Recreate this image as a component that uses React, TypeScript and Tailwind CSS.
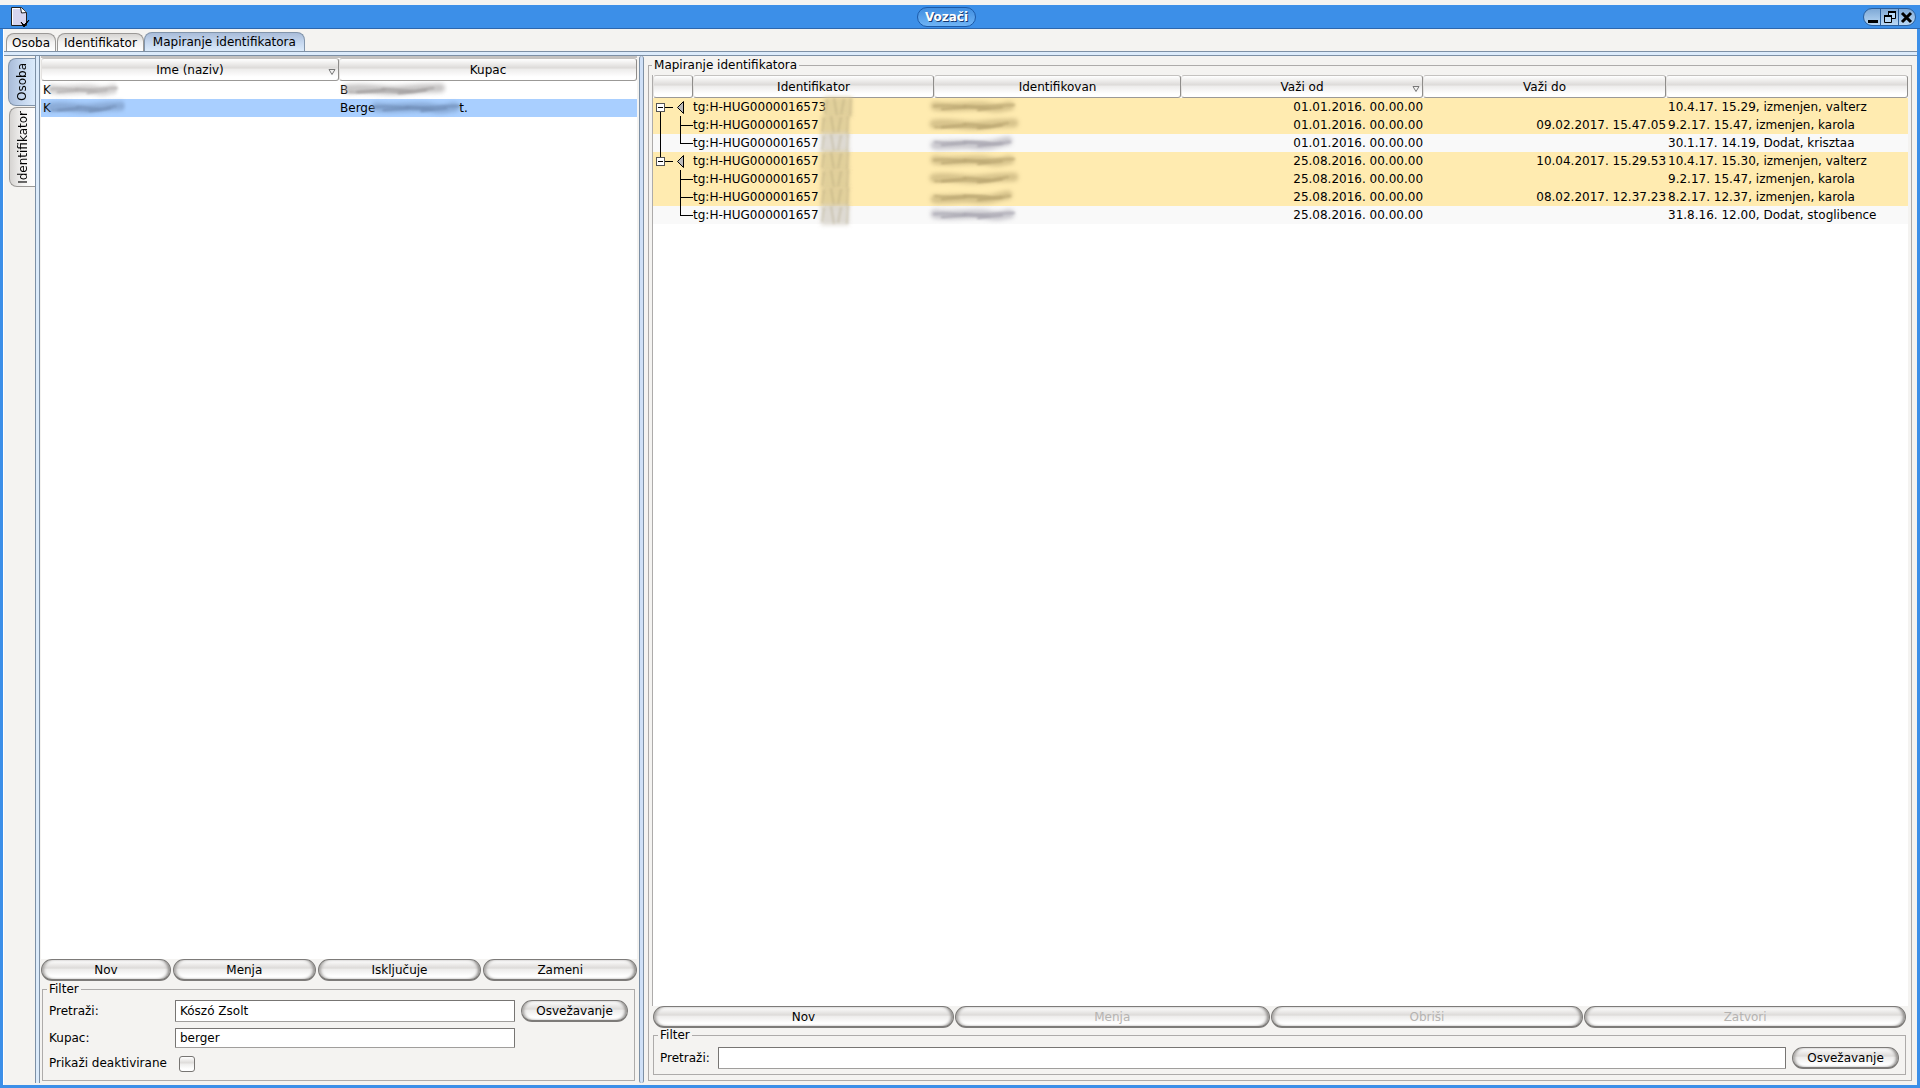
import React, { useState } from 'react';

const history = [
  { tree: 'root', id: 'tg:H-HUG0000016573', from: '01.01.2016. 00.00.00', to: '', note: '10.4.17. 15.29, izmenjen, valterz', hot: true },
  { tree: 'child', id: 'tg:H-HUG000001657', from: '01.01.2016. 00.00.00', to: '09.02.2017. 15.47.05', note: '9.2.17. 15.47, izmenjen, karola', hot: true, trunk: true },
  { tree: 'last', id: 'tg:H-HUG000001657', from: '01.01.2016. 00.00.00', to: '', note: '30.1.17. 14.19, Dodat, krisztaa', hot: false, trunk: true },
  { tree: 'root', id: 'tg:H-HUG000001657', from: '25.08.2016. 00.00.00', to: '10.04.2017. 15.29.53', note: '10.4.17. 15.30, izmenjen, valterz', hot: true, end: true },
  { tree: 'child', id: 'tg:H-HUG000001657', from: '25.08.2016. 00.00.00', to: '', note: '9.2.17. 15.47, izmenjen, karola', hot: true },
  { tree: 'child', id: 'tg:H-HUG000001657', from: '25.08.2016. 00.00.00', to: '08.02.2017. 12.37.23', note: '8.2.17. 12.37, izmenjen, karola', hot: true },
  { tree: 'last', id: 'tg:H-HUG000001657', from: '25.08.2016. 00.00.00', to: '', note: '31.8.16. 12.00, Dodat, stoglibence', hot: false },
];

const glossy = 'bg-[linear-gradient(180deg,#ffffff_0%,#f1f0ef_18%,#dddbd9_42%,#eeedec_50%,#ffffff_85%)]';

function PushButton({ label, className = '', disabled = false }: { label: string; className?: string; disabled?: boolean }) {
  return (
    <button
      type="button"
      disabled={disabled}
      className={`h-[22px] min-w-0 rounded-full border border-[#7d7b79] border-b-2 pt-px text-center leading-4 text-black shadow-[inset_3px_0_3px_-1px_#a5a3a1,inset_-3px_0_3px_-1px_#8c8a88] disabled:text-[#b5b3b1] ${glossy} ${className}`}
    >
      {label}
    </button>
  );
}

function HeaderCell({ label = '', sorted = false }: { label?: string; sorted?: boolean }) {
  return (
    <th className="h-[23px] p-0 font-normal">
      <div className={`relative h-[23px] rounded-[3px] border border-t-[#c4c2c0] border-l-[#e4e2e0] border-r-[#8f8d8b] border-b-[#9b9997] text-center leading-[22px] ${glossy}`}>
        {label}
        {sorted && (
          <svg className="absolute right-0.5 bottom-1 h-2 w-2" viewBox="0 0 8 8" fill="none" stroke="#777">
            <path d="M1 1.5h6L4 6.5z" />
          </svg>
        )}
      </div>
    </th>
  );
}

// Brushed-over part of a cell value
function Smudge({ width, color, variant = 0, className = '' }: { width: number; color: string; variant?: number; className?: string }) {
  const strokes = [
    'M1 8C20 11 38 6 54 9S68 8 76 8',
    'M0 8C18 6 32 11 48 9S68 7 80 7',
    'M1 11C16 12 26 9 42 11S64 8 74 7',
  ];
  return (
    <svg className={`inline-block h-[18px] overflow-visible align-top ${className}`} width={width} height="18" viewBox="0 0 80 18" preserveAspectRatio="none" fill="none">
      <g stroke={color} strokeLinecap="round">
        <path className="blur-[2px]" d={strokes[variant % 3]} strokeWidth="9" opacity="0.6" />
        <path className="blur-[1px]" d={strokes[(variant + 1) % 3]} strokeWidth="2" opacity="0.8" />
        <path className="blur-[1px]" d="M8 11l24-2M30 8l26 2M44 12l24-3" strokeWidth="2" />
      </g>
    </svg>
  );
}

function IdSmudge({ color, className }: { color: string; className: string }) {
  return (
    <svg className={`relative inline-block h-[18px] w-[34px] overflow-visible align-top ${className}`} viewBox="0 0 34 18" fill="none">
      <path className="blur-[2px]" d="M2 -1h28v20H2z" fill={color} opacity="0.75" />
      <path className="blur-[1px]" d="M5 2l-2 14M12 0l3 18M22 1l-3 16M29 0l-1 18" stroke="#a0946e" strokeWidth="2" opacity="0.3" />
    </svg>
  );
}

function TreeCell({ kind, trunk, end }: { kind: string; trunk?: boolean; end?: boolean }) {
  if (kind === 'root') {
    return (
      <svg className="block h-[18px] w-10" viewBox="0 0 40 18" shapeRendering="crispEdges" fill="none" stroke="#000">
        {end ? <path d="M7.5 0v5" /> : <path d="M7.5 13v5" />}
        <rect x="3.5" y="5.5" width="8" height="8" fill="#fff" stroke="#555" />
        <path d="M5 9.5h5M12 9.5h8" />
        <path d="M30.5 3.5v12l-6-6z" fill="#bbb" shapeRendering="auto" />
      </svg>
    );
  }
  return (
    <svg className="block h-[18px] w-10" viewBox="0 0 40 18" shapeRendering="crispEdges" fill="none" stroke="#000">
      {trunk && <path d="M7.5 0v18" />}
      <path d={kind === 'last' ? 'M27.5 0v9.5H40' : 'M27.5 0v18M27.5 9.5H40'} />
    </svg>
  );
}

function TextBox({ id, value, className = '' }: { id: string; value: string; className?: string }) {
  const [text, setText] = useState(value);
  return (
    <input
      id={id}
      type="text"
      value={text}
      onChange={(e) => setText(e.target.value)}
      className={`min-w-0 rounded-[1px] border border-[#777573] border-b-[#a09e9c] bg-white px-1 outline-none ${className}`}
    />
  );
}

export default function App() {
  const [deactivated, setDeactivated] = useState(false);

  return (
    <div className="flex min-h-screen flex-col bg-[#f4f3f1] pt-[5px] font-['DejaVu_Sans',sans-serif] text-[12px] leading-4 text-black">
      {/* Title bar */}
      <header className="flex h-6 items-center border-b border-[#2d67ad] bg-[#3c8fe8] pr-1 pl-2.5">
        <svg className="h-[22px] w-5" viewBox="0 0 20 22" fill="none">
          <path d="M1.5 1.5h10l5 5v13h-15z" fill="#d6d5ef" stroke="#222" />
          <path d="M2.5 2.5v16M2.5 2.5h8" stroke="#fff" />
          <path d="M10.5 1.5l1 5.500 5-.5" fill="#fff" stroke="#222" />
          <path d="M11 16l3 3 5-5-5 7z" fill="#000" stroke="#000" />
        </svg>
        <div className="flex flex-1 justify-center">
          <h1 className="h-5 rounded-full border border-[#1c5aa8] bg-gradient-to-b from-[#3f8de0] to-[#6fb4f5] px-[7px] leading-[18px] font-bold text-white [text-shadow:1px_1px_0_#16386e]">Vozači</h1>
        </div>
        <div className="flex h-[18px] overflow-hidden rounded-full border border-[#2b5f9c] bg-[linear-gradient(180deg,#7fa9d6,#b9d8f5)]">
          <button type="button" aria-label="Minimize" className="w-[17px] border-r border-[#2b5f9c]">
            <svg className="h-4 w-4" viewBox="0 0 16 16"><path d="M4 11h10v3H4z" /></svg>
          </button>
          <button type="button" aria-label="Restore" className="w-[18px] border-r border-[#2b5f9c]">
            <svg className="h-4 w-[17px]" viewBox="0 0 17 16" fill="#b9d8f5" stroke="#000">
              <path d="M7.500 2.500h7v7h-7z" /><path d="M7 3h8" strokeWidth="2" />
              <path d="M3.500 6.500h7v7h-7z" /><path d="M3 7h8" strokeWidth="2" />
            </svg>
          </button>
          <button type="button" aria-label="Close" className="w-4">
            <svg className="h-4 w-4" viewBox="0 0 16 16" stroke="#000" strokeWidth="3"><path d="M3 4l9 9M12 4l-9 9" /></svg>
          </button>
        </div>
      </header>

      <div className="flex flex-1 flex-col border-x-[3px] border-b-[3px] border-[#3c8fe8]">
        <div className="flex flex-1 flex-col border-l border-[#ffffff]">
          {/* Main tabs */}
          <nav role="tablist" className="flex h-[22px] items-end pl-0.5">
            <button role="tab" type="button" aria-selected="false" className="h-[18px] rounded-t-lg border border-b-0 border-[#9b9997] bg-gradient-to-b from-[#d6d4d2] via-[#f4f3f2] to-white px-[5px] pt-px">Osoba</button>
            <button role="tab" type="button" aria-selected="false" className="ml-px h-[18px] rounded-t-lg border border-b-0 border-[#9b9997] bg-gradient-to-b from-[#d6d4d2] via-[#f4f3f2] to-white px-1.5 pt-px">Identifikator</button>
            <button role="tab" type="button" aria-selected="true" className="h-[19px] rounded-t-lg border border-b-0 border-[#8295ab] bg-gradient-to-b from-[#a9bcd9] via-[#c4d6ee] to-[#dcebfb] px-2">Mapiranje identifikatora</button>
          </nav>
          <div className="h-[5px] border-y border-[#7d90a5] bg-[#dcebfb]" />

          <main className="flex flex-1 pr-[5px]">
            {/* Side tabs */}
            <nav role="tablist" className="flex w-[31px] shrink-0 flex-col items-end gap-px pt-0.5">
              <button role="tab" type="button" aria-selected="true" className="flex h-12 w-[27px] items-center justify-center rounded-l-lg border border-r-0 border-[#8295ab] bg-gradient-to-r from-[#a9bcd9] via-[#c4d6ee] to-[#dcebfb]">
                <span className="rotate-180 [writing-mode:vertical-rl]">Osoba</span>
              </button>
              <button role="tab" type="button" aria-selected="false" className="flex h-20 w-[26px] items-center justify-center rounded-l-lg border border-r-0 border-[#9b9997] bg-gradient-to-r from-[#d6d4d2] via-[#f4f3f2] to-white">
                <span className="rotate-180 [writing-mode:vertical-rl]">Identifikator</span>
              </button>
            </nav>
            <div className="mb-0.5 w-[5px] shrink-0 border-x border-[#7d90a5] bg-[#dcebfb]" />

            {/* Drivers */}
            <section className="flex min-w-0 flex-[597] flex-col pb-1 pl-px">
              <div className="flex-1 border-t-2 border-[#c4c2c0] bg-white">
                <table className="w-full table-fixed border-collapse">
                  <thead>
                    <tr>
                      <HeaderCell label="Ime (naziv)" sorted />
                      <HeaderCell label="Kupac" />
                    </tr>
                  </thead>
                  <tbody>
                    <tr className="h-[18px] leading-[18px] whitespace-nowrap">
                      <td className="p-0 pl-0.5">K<Smudge width={66} color="#b5b2b2" /></td>
                      <td className="p-0 pl-px">B<Smudge width={92} color="#a5a2a2" variant={1} /></td>
                    </tr>
                    <tr className="h-[18px] bg-[#a9cfff] leading-[18px] whitespace-nowrap">
                      <td className="p-0 pl-0.5">K<Smudge width={70} color="#7794bd" variant={1} /></td>
                      <td className="p-0 pl-px">Berge<Smudge width={84} color="#7290ba" />t.</td>
                    </tr>
                  </tbody>
                </table>
              </div>
              <div className="flex gap-0.5 pb-px">
                <PushButton label="Nov" className="flex-[129]" />
                <PushButton label="Menja" className="flex-[142]" />
                <PushButton label="Isključuje" className="flex-[163]" />
                <PushButton label="Zameni" className="flex-[153]" />
              </div>
              <fieldset className="mr-0.5 ml-px min-w-0 border border-[#adabaa] px-1.5 pb-2">
                <legend className="-ml-0.5 h-3.5 px-0.5 leading-3.5">Filter</legend>
                <div className="grid grid-cols-[auto_1fr_auto] items-center gap-x-1.5 gap-y-1.5 pt-1">
                  <label htmlFor="driver-search" className="w-[120px]">Pretraži:</label>
                  <TextBox id="driver-search" value="Kószó Zsolt" className="h-[22px]" />
                  <PushButton label="Osvežavanje" className="w-[107px]" />
                  <label htmlFor="driver-customer">Kupac:</label>
                  <TextBox id="driver-customer" value="berger" className="h-5" />
                  <span />
                  <label htmlFor="driver-deactivated" className="whitespace-nowrap">Prikaži deaktivirane</label>
                  <input
                    id="driver-deactivated"
                    type="checkbox"
                    checked={deactivated}
                    onChange={(e) => setDeactivated(e.target.checked)}
                    className={`mt-0.5 ml-1 h-4 w-4 appearance-none rounded-[3px] border border-[#777573] checked:bg-[#7d90a5] ${glossy}`}
                  />
                </div>
              </fieldset>
            </section>

            <div className="mx-0.5 mb-0.5 w-[5px] shrink-0 rounded-full border-x border-[#7d90a5] bg-[#cfe0f7]" />

            {/* Identifier mapping */}
            <section className="flex min-w-0 flex-[1266] flex-col pt-0.5 pb-1 pl-0.5">
              <fieldset className="flex min-w-0 flex-1 flex-col border border-[#adabaa] px-[3px] pb-[5px]">
                <legend className="h-3.5 px-0.5 leading-3.5">Mapiranje identifikatora</legend>
                <div className="mt-[3px] flex-1 border-l border-[#adabaa] bg-white">
                  <table className="w-full table-fixed border-collapse">
                    <colgroup>
                      <col className="w-10" />
                      <col className="w-[241px]" />
                      <col className="w-[247px]" />
                      <col className="w-[242px]" />
                      <col className="w-[243px]" />
                      <col />
                    </colgroup>
                    <thead>
                      <tr>
                        <HeaderCell />
                        <HeaderCell label="Identifikator" />
                        <HeaderCell label="Identifikovan" />
                        <HeaderCell label="Važi od" sorted />
                        <HeaderCell label="Važi do" />
                        <HeaderCell />
                      </tr>
                    </thead>
                    <tbody>
                      {history.map((row, i) => (
                        <tr key={i} className={`h-[18px] leading-[18px] whitespace-nowrap ${row.hot ? 'bg-[#ffebb0]' : 'bg-[#f9f9f9]'}`}>
                          <td className="p-0"><TreeCell kind={row.tree} trunk={row.trunk} end={row.end} /></td>
                          <td className="p-0">{row.id}<IdSmudge color={row.hot ? '#d8c795' : '#d5d0c6'} className={i === 0 ? '-ml-1' : ''} /></td>
                          <td className="p-0"><Smudge width={80} color={row.hot ? '#bda974' : '#aaa8b2'} variant={i} /></td>
                          <td className="p-0 text-right">{row.from}</td>
                          <td className="p-0 text-right">{row.to}</td>
                          <td className="p-0 pl-0.5">{row.note}</td>
                        </tr>
                      ))}
                    </tbody>
                  </table>
                </div>
                <div className="mr-px flex gap-px px-px">
                  <PushButton label="Nov" className="flex-[301]" />
                  <PushButton label="Menja" className="flex-[315]" disabled />
                  <PushButton label="Obriši" className="flex-[313]" disabled />
                  <PushButton label="Zatvori" className="flex-[322]" disabled />
                </div>
                <fieldset className="mr-0.5 ml-px min-w-0 border border-[#adabaa] px-1.5 pb-[5px]">
                  <legend className="-ml-0.5 h-3.5 px-0.5 leading-3.5">Filter</legend>
                  <div className="flex items-center gap-1.5 pt-[5px]">
                    <label htmlFor="mapping-search" className="w-[52px]">Pretraži:</label>
                    <TextBox id="mapping-search" value="" className="h-[22px] flex-1" />
                    <PushButton label="Osvežavanje" className="w-[107px]" />
                  </div>
                </fieldset>
              </fieldset>
            </section>
          </main>
        </div>
      </div>
    </div>
  );
}
